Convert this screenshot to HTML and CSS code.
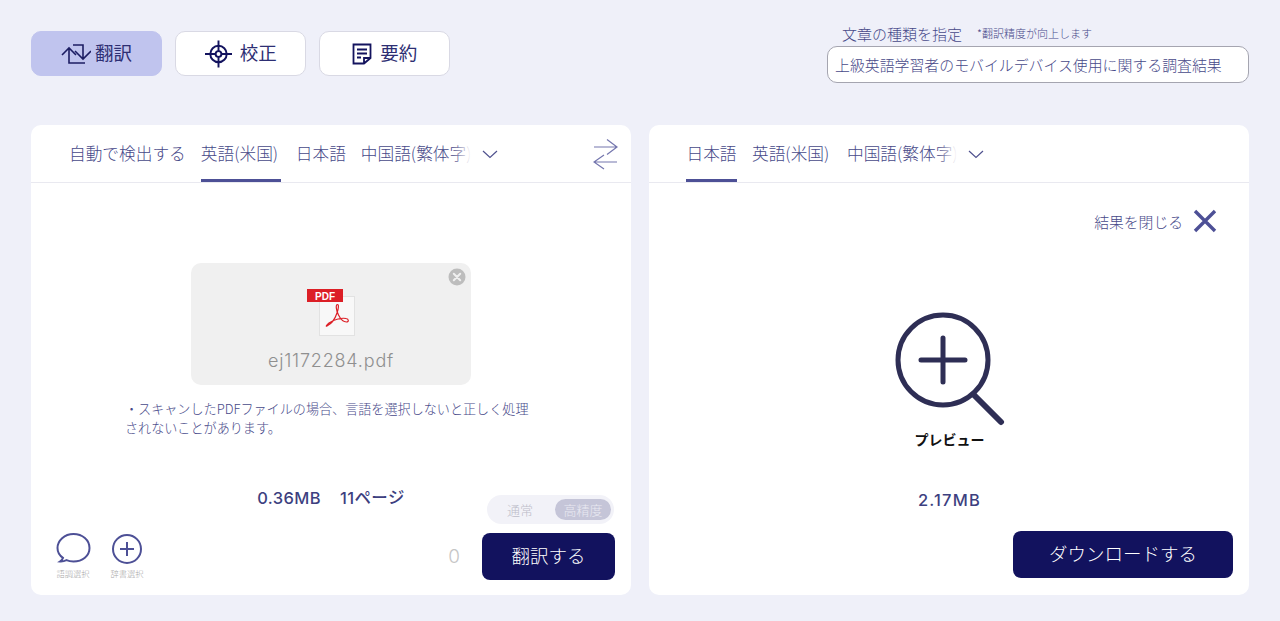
FILE: index.html
```html
<!DOCTYPE html>
<html lang="ja">
<head>
<meta charset="utf-8">
<title>翻訳</title>
<link rel="stylesheet" href="styles.css">
</head>
<body>
<header class="top">
  <nav class="modes">
    <button class="mode active">
      <svg class="mode-icon" width="30" height="22" viewBox="0 0 30 22" fill="none" stroke="#1c1d63" stroke-width="1.600"><path d="M1 12l7-7 7 7M8 5v15h16M12 2h10v13.500M14 8l8 8 8-8"/></svg>
      <span>翻訳</span>
    </button>
    <button class="mode">
      <svg class="mode-icon" width="27" height="28" viewBox="0 0 28 28" fill="none" stroke="#13135e" stroke-width="2"><circle cx="14" cy="14" r="8.500"/><circle cx="14" cy="14" r="3"/><path d="M14 0v11M14 17v11M0 14h11M17 14h11"/></svg>
      <span>校正</span>
    </button>
    <button class="mode">
      <svg class="mode-icon" width="20" height="22" viewBox="0 0 20 22" fill="none" stroke="#13135e" stroke-width="1.800"><path d="M12 20.500H1.500V1.500h17V15zM12 20.500V15h6.500M5 6.500h10M5 10.500h10M5 14.500h4"/></svg>
      <span>要約</span>
    </button>
  </nav>
  <div class="doc-type">
    <div class="doc-label"><span class="doc-title">文章の種類を指定</span><span class="doc-hint">*翻訳精度が向上します</span></div>
    <div class="doc-input">上級英語学習者のモバイルデバイス使用に関する調査結果</div>
  </div>
</header>
<main class="panels">
  <section class="panel">
    <div class="tabs">
      <span class="tab">自動で検出する</span>
      <span class="tab selected us">英語(米国)</span>
      <span class="tab jp">日本語</span>
      <span class="tab clipped">中国語(繁体字)</span>
      <svg class="chevron" width="16" height="9" viewBox="0 0 16 9" fill="none" stroke="#50528f" stroke-width="1.200"><path d="M1 1l7 6.500L15 1"/></svg>
      <svg class="swap" width="25" height="32" viewBox="0 0 25 32" fill="none" stroke="#7476ae" stroke-width="1.200"><path d="M1 8h23M14 .5 24 8 14 15.500M24 23H1M11 16 1 23l10 7"/></svg>
    </div>
    <div class="source-body">
      <div class="file-card">
        <svg class="close" width="18" height="18" viewBox="0 0 18 18"><circle cx="9" cy="9" r="8.500" fill="#bdbdbd"/><path d="M5.800 5.800l6.400 6.400M12.200 5.800l-6.400 6.400" stroke="#f0f0f0" stroke-width="2" stroke-linecap="round"/></svg>
        <svg class="pdf" width="50" height="50" viewBox="0 0 50 50">
          <rect x="13.500" y="7.500" width="35" height="39" fill="#f8f8f8" stroke="#e2e2e2"/>
          <rect x="1" y="0" width="36" height="13" fill="#dc1f26"/>
          <text class="pdf-text" x="19" y="11" text-anchor="middle">PDF</text>
          <path d="M21 37C25 35 29 30 31 24 32.500 20 33 15.500 31.500 15.500 29.500 15.500 30 21 32.500 26 34.500 30 37.500 33 40.500 33 43 33 43 30 40 29.500 35 28.500 27 31 23 34 20.500 36 19.500 38 21 37z" fill="none" stroke="#dc1f26" stroke-width="1.200"/>
        </svg>
        <div class="file-name">ej1172284.pdf</div>
      </div>
      <p class="note">・スキャンしたPDFファイルの場合、言語を選択しないと正しく処理されないことがあります。</p>
      <div class="stats"><span>0.36MB</span><span>11ページ</span></div>
      <div class="source-foot">
        <div class="tools">
          <div class="tool">
            <svg width="35" height="32" viewBox="0 0 35 32" fill="none" stroke="#4d5096" stroke-width="2"><path d="M4 29.500c1.500-1 2.500-2.200 3-3.600C3.500 23.500 1.500 20 1.500 16 1.500 8.500 8.500 2 17.500 2s16 6 16 14-7 13.500-16 13.500c-2.500 0-5-.4-7-1.300-1.800.9-4 1.500-6.500 1.300z" transform="translate(0 -1)"/></svg>
            <span>語調選択</span>
          </div>
          <div class="tool">
            <svg width="32" height="32" viewBox="0 0 32 32" fill="none" stroke="#4d5096" stroke-width="2"><circle cx="16" cy="16" r="14"/><path d="M16 9v14M9 16h14"/></svg>
            <span>辞書選択</span>
          </div>
        </div>
        <div class="actions">
          <div class="quality"><span class="q-item">通常</span><span class="q-item on">高精度</span></div>
          <div class="action-row">
            <span class="count">0</span>
            <button class="primary translate">翻訳する</button>
          </div>
        </div>
      </div>
    </div>
  </section>
  <section class="panel">
    <div class="tabs right-tabs">
      <span class="tab selected jp">日本語</span>
      <span class="tab us">英語(米国)</span>
      <span class="tab clipped">中国語(繁体字)</span>
      <svg class="chevron" width="16" height="9" viewBox="0 0 16 9" fill="none" stroke="#50528f" stroke-width="1.200"><path d="M1 1l7 6.500L15 1"/></svg>
    </div>
    <div class="result-body">
      <div class="result-close">
        <span>結果を閉じる</span>
        <svg width="24" height="24" viewBox="0 0 24 24" fill="none" stroke="#4d5096" stroke-width="3.400"><path d="M2 2l20 20M22 2L2 22"/></svg>
      </div>
      <div class="preview">
        <svg width="110" height="116" viewBox="0 0 110 116" fill="none" stroke="#2e2e55" stroke-width="5" stroke-linecap="round"><circle cx="48" cy="49" r="45"/><path d="M48 27v44M26 49h44"/><path d="M79 84l27 27" stroke-width="6"/></svg>
        <span class="preview-label">プレビュー</span>
      </div>
      <div class="result-size">2.17MB</div>
      <div class="result-foot"><button class="primary download">ダウンロードする</button></div>
    </div>
  </section>
</main>
</body>
</html>
```
FILE: styles.css
```css
* { box-sizing: border-box; }
html, body { height: 100%; }
body {
  margin: 0;
  height: 621px;
  overflow: hidden;
  background: #eff0f9;
  color: #474989;
  font-family: "Noto Sans CJK JP", "Noto Sans", sans-serif;
  font-weight: 300;
}
button { font-family: inherit; font-weight: inherit; cursor: pointer; }
.top {
  display: flex;
  justify-content: space-between;
  height: 125px;
  padding: 0 31px;
}
.modes {
  display: flex;
  gap: 13.200px;
  padding-top: 31px;
}
.mode {
  display: flex;
  align-items: center;
  justify-content: center;
  gap: 8px;
  width: 131px;
  height: 45px;
  background: #fff;
  border: 1px solid #d9d9e4;
  border-radius: 10px;
  color: #2d2e73;
  font-size: 18.500px;
  font-weight: 400;
  padding: 0;
}
.mode span { padding-bottom: 3px; }
.mode.active {
  gap: 4px;
  background: #c0c4ee;
  border-color: #c0c4ee;
}
.doc-type {
  width: 422px;
  padding-top: 24px;
}
.doc-label {
  display: flex;
  align-items: center;
  height: 22px;
  padding: 0 0 4px 15px;
}
.doc-title { font-size: 15px; }
.doc-hint { font-size: 11px; margin-left: 15px; }
.doc-input {
  display: flex;
  align-items: center;
  height: 37px;
  padding-left: 7px;
  background: #fff;
  border: 1px solid #a5a5b0;
  border-radius: 10px;
  font-size: 14.900px;
  white-space: nowrap;
}
.panels {
  display: flex;
  gap: 18px;
  padding: 0 31px;
}
.panel {
  width: 600px;
  height: 470px;
  background: #fff;
  border-radius: 10px;
  overflow: hidden;
}
.tabs {
  position: relative;
  display: flex;
  align-items: stretch;
  gap: 15px;
  height: 58px;
  padding-left: 38px;
  border-bottom: 1px solid #e9e9f0;
}
.tab {
  height: 57px;
  padding-top: 15px;
  font-size: 16.700px;
  line-height: 27px;
  white-space: nowrap;
  text-align: center;
  border-bottom: 3px solid transparent;
}
.tab.us { width: 80px; text-align: left; }
.tab.jp { width: 50px; }
.tab.selected { border-bottom-color: #4d5096; }
.tab.clipped {
  position: relative;
  width: 110px;
  overflow: hidden;
  text-align: left;
}
.tab.clipped::after {
  content: "";
  position: absolute;
  top: 0;
  right: 0;
  width: 18px;
  height: 100%;
  background: linear-gradient(to right, rgba(255,255,255,0), #fff);
}
.chevron { align-self: center; margin: 2px 0 0 -4px; }
.swap { position: absolute; top: 14px; right: 13px; }
.right-tabs { padding-left: 37px; }
.right-tabs .tab.selected { width: 51px; }
.source-body { padding-top: 80px; }
.file-card {
  position: relative;
  display: flex;
  flex-direction: column;
  align-items: center;
  width: 280px;
  height: 122px;
  margin-left: 160px;
  padding-top: 26px;
  background: #f0f0f0;
  border-radius: 10px;
}
.close { position: absolute; top: 5px; right: 5px; }
.pdf { margin-left: -1px; }
.pdf-text {
  fill: #fff;
  font: 700 10px "Liberation Sans", sans-serif;
}
.file-name {
  margin-top: 11px;
  color: #8f8f8f;
  font-size: 18px;
  letter-spacing: .8px;
  line-height: 22px;
  font-family: "Inter", "Noto Sans", sans-serif;
  font-weight: 300;
}
.note {
  width: 412px;
  margin: 14px 0 0 94px;
  font-size: 13.100px;
  line-height: 19px;
}
.stats {
  display: flex;
  justify-content: center;
  gap: 19px;
  margin-top: 50px;
  color: #3d3f7f;
  font-family: "Inter", "Noto Sans CJK JP", sans-serif;
  font-size: 16.500px;
  font-weight: 500;
  letter-spacing: .4px;
  line-height: 22px;
}
.source-foot {
  display: flex;
  justify-content: space-between;
  margin-top: -14px;
  padding: 0 16px 0 24px;
}
.tools {
  display: flex;
  gap: 18px;
  padding-top: 38px;
}
.tool {
  display: flex;
  flex-direction: column;
  align-items: center;
  width: 36px;
  color: #a7a7a7;
  font-size: 8.300px;
  line-height: 10px;
  white-space: nowrap;
}
.tool svg { margin-bottom: 3px; }
.actions {
  display: flex;
  flex-direction: column;
  align-items: flex-end;
  gap: 9px;
}
.quality {
  display: flex;
  align-items: center;
  justify-content: space-between;
  width: 127px;
  height: 29px;
  margin-right: 1px;
  padding: 0 3px 0 20px;
  background: #f2f2f8;
  border-radius: 15px;
  font-size: 13px;
}
.q-item { color: #bcbcc8; }
.q-item.on {
  width: 56px;
  height: 21px;
  line-height: 21px;
  text-align: center;
  background: #c5c5d8;
  border-radius: 11px;
  color: #eaeaf2;
}
.action-row {
  display: flex;
  align-items: center;
  gap: 22px;
}
.count {
  color: #c6c6c6;
  font-size: 19px;
  font-family: "Inter", sans-serif;
  font-weight: 300;
}
.primary {
  height: 47px;
  background: #12125e;
  border: 0;
  border-radius: 8px;
  color: #fff;
  font-size: 18.500px;
  padding: 0 0 3px;
}
.translate { width: 133px; }
.download { width: 220px; }
.result-body { padding: 24px 16px 0 0; }
.result-close {
  display: flex;
  justify-content: flex-end;
  align-items: center;
  gap: 10px;
  height: 28px;
  padding-right: 16px;
  font-size: 14.800px;
}
.preview {
  display: flex;
  flex-direction: column;
  align-items: center;
  margin-top: 76px;
  padding-left: 17px;
  height: 145px;
}
.preview-label {
  margin-top: 3px;
  color: #111;
  font-size: 14px;
  font-weight: 700;
  line-height: 18px;
}
.result-size {
  margin-top: 33px;
  padding-left: 17px;
  text-align: center;
  color: #3d3f7f;
  font-family: "Inter", "Noto Sans CJK JP", sans-serif;
  font-size: 16.500px;
  font-weight: 500;
  letter-spacing: 1.200px;
  line-height: 22px;
}
.result-foot {
  display: flex;
  justify-content: flex-end;
  margin-top: 20px;
}
```
